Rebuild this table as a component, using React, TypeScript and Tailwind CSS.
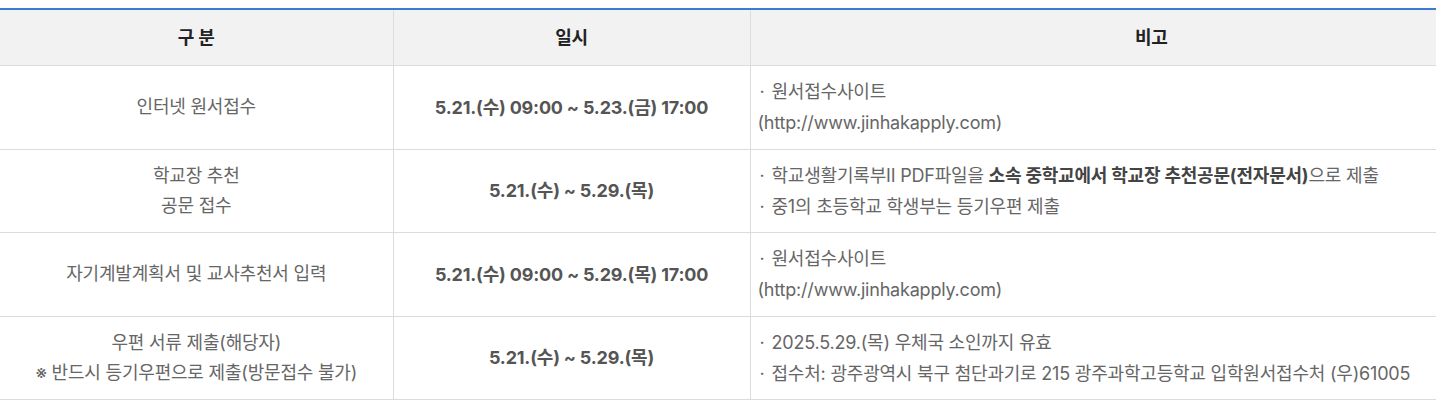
const ROWS = [
  {
    label: ['인터넷 원서접수'],
    date: '5.21.(수) 09:00 ~ 5.23.(금) 17:00',
    notes: [<>원서접수사이트</>, <>(http://www.jinhakapply.com)</>],
    plain: [false, true],
  },
  {
    label: ['학교장 추천', '공문 접수'],
    date: '5.21.(수) ~ 5.29.(목)',
    notes: [
      <>학교생활기록부II PDF파일을 <b className="font-bold text-[#444]">소속 중학교에서 학교장 추천공문(전자문서)</b>으로 제출</>,
      <>중1의 초등학교 학생부는 등기우편 제출</>,
    ],
    plain: [false, false],
  },
  {
    label: ['자기계발계획서 및 교사추천서 입력'],
    date: '5.21.(수) 09:00 ~ 5.29.(목) 17:00',
    notes: [<>원서접수사이트</>, <>(http://www.jinhakapply.com)</>],
    plain: [false, true],
  },
  {
    label: ['우편 서류 제출(해당자)', '※ 반드시 등기우편으로 제출(방문접수 불가)'],
    date: '5.21.(수) ~ 5.29.(목)',
    notes: [
      <>2025.5.29.(목) 우체국 소인까지 유효</>,
      <>접수처: 광주광역시 북구 첨단과기로 215 광주과학고등학교 입학원서접수처 (우)61005</>,
    ],
    plain: [false, false],
  },
]

export default function App() {
  return (
    <div className="w-[1436px] h-[409px] bg-white pt-2 font-['Inter','Noto_Sans_CJK_KR',sans-serif] text-[18px] tracking-[-0.2px] text-[#666]">
      <table className="w-full border-collapse table-fixed border-t-2 border-[#3a7bd5]">
        <colgroup>
          <col className="w-[393px]" />
          <col className="w-[357px]" />
          <col />
        </colgroup>
        <thead>
          <tr className="h-[56px] bg-[#f2f2f2] border-b border-[#dcdcdc]">
            <th className="font-bold text-[#222] text-center">구 분</th>
            <th className="font-bold text-[#222] text-center border-l border-[#dcdcdc]">일시</th>
            <th className="font-bold text-[#222] text-center pl-[116px] border-l border-[#dcdcdc]">비고</th>
          </tr>
        </thead>
        <tbody>
          {ROWS.map((r, i) => (
            <tr key={i} className={`${i % 2 === 0 ? 'h-[84px]' : 'h-[83px]'} border-b border-[#dcdcdc]`}>
              <td className="text-center leading-[30px]">
                {r.label.map((l, j) => <div key={j}>{l}</div>)}
              </td>
              <td className="text-center font-bold text-[#555] border-l border-[#dcdcdc]">{r.date}</td>
              <td className="pl-[7px] leading-[31px] border-l border-[#dcdcdc]">
                {r.notes.map((n, j) => (
                  <div key={j}>
                    {!r.plain[j] && <span className="inline-block w-[14px] pl-[2px]">·</span>}
                    {n}
                  </div>
                ))}
              </td>
            </tr>
          ))}
        </tbody>
      </table>
    </div>
  )
}
